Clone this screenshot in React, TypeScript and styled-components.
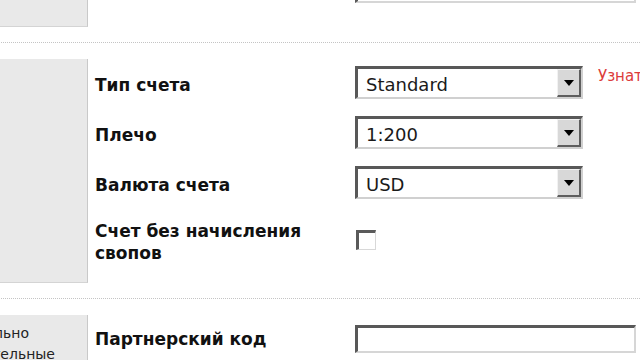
import React from "react";
import styled, { createGlobalStyle } from "styled-components";

const GlobalStyle = createGlobalStyle`
  html, body {
    margin: 0;
    padding: 0;
    background: #ffffff;
  }
  body {
    font-family: "DejaVu Sans", "Liberation Sans", sans-serif;
    color: #111;
  }
`;

const Viewport = styled.div`
  width: 640px;
  height: 360px;
  overflow: hidden;
  background: #fff;
`;

// the screenshot is a crop of a wider form: shift it up and left
const Page = styled.div`
  width: 720px;
  margin: -40px 0 0 -72px;
`;

const Section = styled.div`
  display: grid;
  grid-template-columns: 160px 1fr;
`;

const SideCell = styled.div`
  box-sizing: border-box;
  background: #e9e9e9;
  border-right: 1px solid #c9c9c9;
  border-bottom: 1px solid #d4d4d4;
  padding: 8px 6px 8px 1px;
  font-size: 14px;
  line-height: 21px;
  color: #222;
  white-space: nowrap;
`;

const Separator = styled.div<{ $top: number; $bottom: number }>`
  margin: ${(p) => p.$top}px 0 ${(p) => p.$bottom}px;
  border-top: 1px dotted #c4c4c4;
`;

const FormGrid = styled.div<{ $pt: number; $pb: number }>`
  display: grid;
  grid-template-columns: 245px auto auto;
  justify-content: start;
  align-items: center;
  column-gap: 15px;
  row-gap: 17px;
  padding: ${(p) => p.$pt}px 0 ${(p) => p.$pb}px 7px;
`;

const Label = styled.div<{ $shift?: number }>`
  font-weight: bold;
  font-size: 17px;
  line-height: 22px;
  padding-top: ${(p) => p.$shift ?? 4}px;
  color: #111;
`;

const SelectBox = styled.div`
  box-sizing: border-box;
  display: flex;
  width: 228px;
  height: 33px;
  background: #fff;
  border-style: solid;
  border-width: 3px 2px 2px 3px;
  border-color: #585858 #d0d0d0 #d0d0d0 #585858;
`;

const SelectValue = styled.div`
  flex: 1;
  padding: 3px 0 0 8px;
  font-size: 18px;
  line-height: 25px;
  color: #1a1a1a;
`;

const DropButton = styled.div`
  box-sizing: border-box;
  width: 24px;
  background: #d8d8d8;
  border-style: solid;
  border-width: 1px 2px 2px 1px;
  border-color: #f2f2f2 #5e5e5e #5e5e5e #f2f2f2;
  display: flex;
  align-items: center;
  justify-content: center;
`;

const Arrow = styled.span`
  width: 0;
  height: 0;
  border-left: 5px solid transparent;
  border-right: 5px solid transparent;
  border-top: 6px solid #000;
`;

const TextInput = styled.div<{ $h: number }>`
  box-sizing: border-box;
  width: 281px;
  height: ${(p) => p.$h}px;
  background: #fff;
  border-style: solid;
  border-width: 3px 2px 2px 3px;
  border-color: #585858 #d6d6d6 #d6d6d6 #585858;
`;

const CheckBox = styled.div`
  box-sizing: border-box;
  width: 20px;
  height: 20px;
  margin-left: 1px;
  background: #fff;
  border-style: solid;
  border-width: 3px 1px 1px 3px;
  border-color: #5a5a5a #d8d8d8 #d8d8d8 #5a5a5a;
`;

const InfoLink = styled.a`
  align-self: start;
  font-size: 15px;
  line-height: 20px;
  color: #dc3b3a;
  text-decoration: none;
  white-space: nowrap;
`;

const Select: React.FC<{ value: string }> = ({ value }) => (
  <SelectBox>
    <SelectValue>{value}</SelectValue>
    <DropButton>
      <Arrow />
    </DropButton>
  </SelectBox>
);

export default function App() {
  return (
    <Viewport>
      <GlobalStyle />
      <Page>
        <Section>
          <SideCell />
          <FormGrid $pt={13} $pb={24}>
            <Label>Подтверждение пароля</Label>
            <TextInput $h={30} />
            <span />
          </FormGrid>
        </Section>

        <Separator $top={15} $bottom={16} />

        <Section>
          <SideCell />
          <FormGrid $pt={7} $pb={19}>
            <Label>Тип счета</Label>
            <Select value="Standard" />
            <InfoLink href="#">Узнать больше</InfoLink>

            <Label>Плечо</Label>
            <Select value="1:200" />
            <span />

            <Label>Валюта счета</Label>
            <Select value="USD" />
            <span />

            <Label>
              Счет без начисления
              <br />
              свопов
            </Label>
            <CheckBox />
            <span />
          </FormGrid>
        </Section>

        <Separator $top={15} $bottom={16} />

        <Section>
          <SideCell>
            Опционально
            <br />
            дополнительные
          </SideCell>
          <FormGrid $pt={8} $pb={20}>
            <Label $shift={1}>Партнерский код</Label>
            <TextInput $h={28} />
            <span />
          </FormGrid>
        </Section>
      </Page>
    </Viewport>
  );
}
